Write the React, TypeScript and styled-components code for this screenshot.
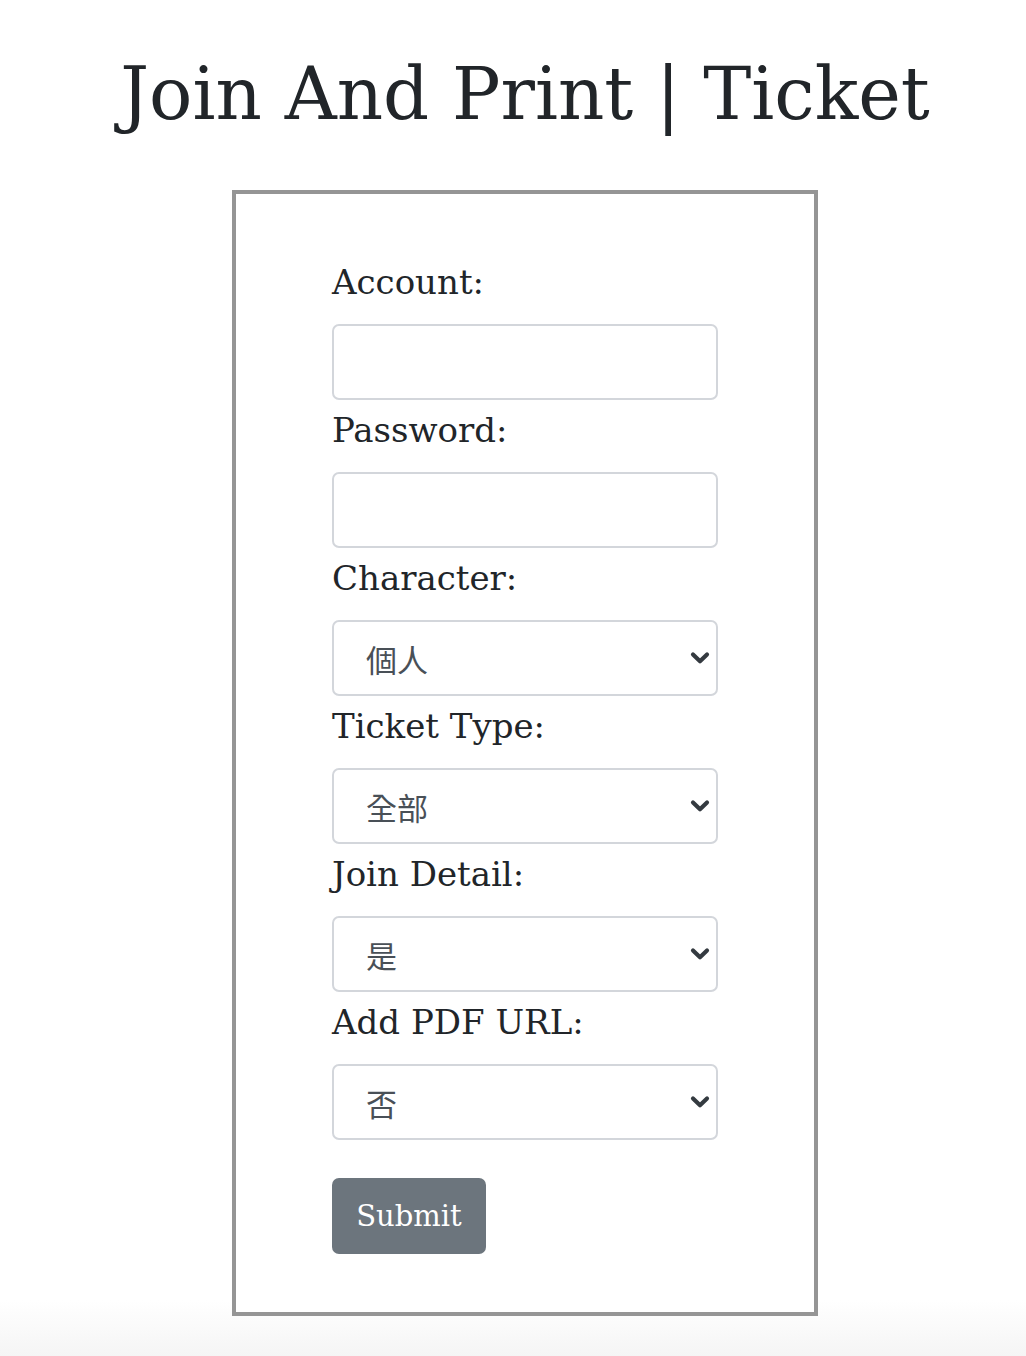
import React from "react";
import styled, { createGlobalStyle } from "styled-components";

const GlobalStyle = createGlobalStyle`
  html, body {
    margin: 0;
    padding: 0;
  }
  body {
    min-height: 1356px;
    font-family: "DejaVu Serif", "Liberation Serif", serif;
    color: #212529;
    background: linear-gradient(to bottom, #ffffff 0px, #ffffff 1300px, #f5f5f5 1356px);
  }
`;

const Page = styled.main`
  display: flex;
  flex-direction: column;
  align-items: center;
  padding: 51px 0 0 24px;
`;

const Title = styled.h1`
  margin: 0 0 53px;
  font-size: 72px;
  font-weight: 400;
  line-height: 1.2;
  color: #212529;
  white-space: nowrap;
`;

const Card = styled.form`
  box-sizing: border-box;
  width: 586px;
  border: 4px solid #959595;
  background: #ffffff;
  padding: 58px 96px 58px;
  display: flex;
  flex-direction: column;
`;

const Field = styled.div`
  display: flex;
  flex-direction: column;
`;

const Label = styled.label`
  display: block;
  font-size: 34px;
  line-height: 60px;
  margin-bottom: 12px;
  color: #212529;
`;

const TextInput = styled.input`
  box-sizing: border-box;
  width: 100%;
  height: 76px;
  border: 2px solid #d3d6db;
  border-radius: 7px;
  padding: 0 32px;
  font-size: 32px;
  background: #fff;
  outline: none;
`;

const SelectWrap = styled.div`
  position: relative;
  width: 100%;
`;

const Select = styled.select`
  box-sizing: border-box;
  width: 100%;
  height: 76px;
  appearance: none;
  -webkit-appearance: none;
  border: 2px solid #d3d6db;
  border-radius: 7px;
  padding: 0 60px 0 32px;
  font-family: "Noto Sans CJK TC", "Noto Sans CJK SC", sans-serif;
  font-size: 31px;
  color: #495057;
  background: #fff;
  outline: none;
`;

const Chevron = styled.svg`
  position: absolute;
  right: 8px;
  top: 50%;
  width: 20px;
  height: 14px;
  transform: translateY(-50%);
  pointer-events: none;
`;

const SubmitButton = styled.button`
  align-self: flex-start;
  margin-top: 38px;
  width: 154px;
  height: 76px;
  border: none;
  border-radius: 7px;
  background: #6c757d;
  color: #ffffff;
  font-family: "DejaVu Serif", "Liberation Serif", serif;
  font-size: 29px;
  cursor: pointer;
`;

type SelectFieldProps = {
  label: string;
  id: string;
  options: string[];
};

const ChevronIcon = () => (
  <Chevron viewBox="0 0 20 14" aria-hidden="true">
    <path
      d="M3 3.5 L10 10.2 L17 3.5"
      fill="none"
      stroke="#343a40"
      strokeWidth="4.2"
      strokeLinecap="round"
      strokeLinejoin="round"
    />
  </Chevron>
);

const SelectField = ({ label, id, options }: SelectFieldProps) => (
  <Field>
    <Label htmlFor={id}>{label}</Label>
    <SelectWrap>
      <Select id={id} defaultValue={options[0]}>
        {options.map((o) => (
          <option key={o} value={o}>
            {o}
          </option>
        ))}
      </Select>
      <ChevronIcon />
    </SelectWrap>
  </Field>
);

export default function App() {
  return (
    <>
      <GlobalStyle />
      <Page>
        <Title>Join And Print | Ticket</Title>
        <Card onSubmit={(e) => e.preventDefault()}>
          <Field>
            <Label htmlFor="account">Account:</Label>
            <TextInput id="account" type="text" />
          </Field>
          <Field>
            <Label htmlFor="password">Password:</Label>
            <TextInput id="password" type="password" />
          </Field>
          <SelectField label="Character:" id="character" options={["個人", "團體"]} />
          <SelectField label="Ticket Type:" id="ticketType" options={["全部", "部分"]} />
          <SelectField label="Join Detail:" id="joinDetail" options={["是", "否"]} />
          <SelectField label="Add PDF URL:" id="addPdf" options={["否", "是"]} />
          <SubmitButton type="submit">Submit</SubmitButton>
        </Card>
      </Page>
    </>
  );
}
